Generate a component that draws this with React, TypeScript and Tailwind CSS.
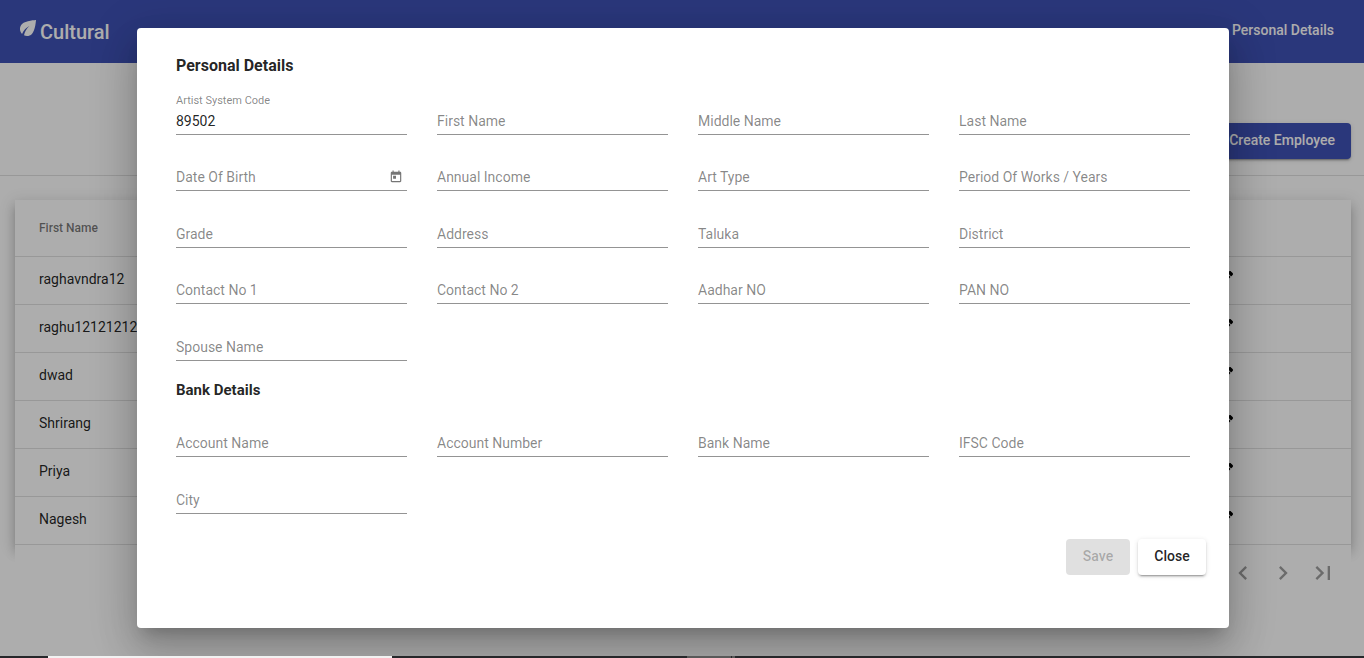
import { useId, useState } from "react";
import type { ReactNode } from "react";
import { FaPencilAlt } from "react-icons/fa";

const employees = ["raghavndra12", "raghu12121212", "dwad", "Shrirang", "Priya", "Nagesh"];

function Icon({ path, className }: { path: string; className: string }) {
  return (
    <svg viewBox="0 0 24 24" fill="currentColor" aria-hidden="true" className={className}>
      <path d={path} />
    </svg>
  );
}

const icons = {
  leaf: "M6.05 8.05c-2.73 2.73-2.73 7.15-.02 9.88 1.47-3.4 4.09-6.24 7.36-7.93-2.77 2.34-4.71 5.61-5.39 9.32 2.6 1.23 5.8.78 7.95-1.37C19.43 14.47 20 4 20 4S9.53 4.57 6.05 8.05z",
  today:
    "M19 3h-1V1h-2v2H8V1H6v2H5c-1.11 0-1.99.9-1.99 2L3 19c0 1.1.89 2 2 2h14c1.1 0 2-.9 2-2V5c0-1.1-.9-2-2-2zm0 16H5V8h14v11zM7 10h5v5H7z",
  previous: "M15.41 7.41L14 6l-6 6 6 6 1.41-1.41L10.83 12z",
  next: "M10 6L8.59 7.41 13.17 12l-4.58 4.59L10 18l6-6z",
  last: "M5.59 7.41L10.18 12l-4.59 4.59L7 18l6-6-6-6zM16 6h2v12h-2z",
};

function Field({ label, initial = "", children }: { label: string; initial?: string; children?: ReactNode }) {
  const id = useId();
  const [value, setValue] = useState(initial);
  return (
    <div className="flex flex-col justify-end">
      <div className="relative flex items-center border-b border-[#949494] pb-[3px]">
        <input
          id={id}
          value={value}
          placeholder=" "
          onChange={(event) => setValue(event.target.value)}
          className="peer h-5 w-full min-w-0 bg-transparent text-sm text-black/87 outline-none"
        />
        <label
          htmlFor={id}
          className="pointer-events-none absolute left-0 -top-[18px] text-[11px] leading-4 text-black/48 peer-placeholder-shown:top-0 peer-placeholder-shown:text-sm peer-placeholder-shown:leading-5"
        >
          {label}
        </label>
        {children}
      </div>
    </div>
  );
}

function Dialog() {
  return (
    <div className="absolute inset-0 flex items-center justify-center bg-black/32 pl-0.5">
      <form
        role="dialog"
        aria-label="Personal Details"
        onSubmit={(event) => event.preventDefault()}
        className="min-h-[600px] w-full max-w-[1092px] rounded bg-white pt-7 shadow-[0_11px_15px_-7px_rgba(0,0,0,0.2),0_24px_38px_3px_rgba(0,0,0,0.14),0_9px_46px_8px_rgba(0,0,0,0.12)]"
      >
        <div className="px-[39px]">
          <h2 className="mb-0.5 text-base leading-5 font-bold text-black/87">Personal Details</h2>
          <div className="grid min-h-[283px] auto-rows-fr grid-cols-4 gap-x-[30px]">
            <Field label="Artist System Code" initial="89502" />
            <Field label="First Name" />
            <Field label="Middle Name" />
            <Field label="Last Name" />
            <Field label="Date Of Birth">
              <button type="button" aria-label="Open calendar" className="mr-1 text-black/54">
                <Icon path={icons.today} className="size-3.5" />
              </button>
            </Field>
            <Field label="Annual Income" />
            <Field label="Art Type" />
            <Field label="Period Of Works / Years" />
            <Field label="Grade" />
            <Field label="Address" />
            <Field label="Taluka" />
            <Field label="District" />
            <Field label="Contact No 1" />
            <Field label="Contact No 2" />
            <Field label="Aadhar NO" />
            <Field label="PAN NO" />
            <Field label="Spouse Name" />
          </div>
          <h2 className="mt-[19px] text-[15px] leading-5 font-bold text-black/87">Bank Details</h2>
          <div className="grid min-h-[114px] auto-rows-fr grid-cols-4 gap-x-[30px]">
            <Field label="Account Name" />
            <Field label="Account Number" />
            <Field label="Bank Name" />
            <Field label="IFSC Code" />
            <Field label="City" />
          </div>
        </div>
        <div className="mt-[25px] flex justify-end gap-2 px-[23px]">
          <button
            type="submit"
            disabled
            className="h-9 min-w-16 rounded bg-black/12 px-4 pb-0.5 text-sm font-medium text-black/26"
          >
            Save
          </button>
          <button
            type="button"
            className="h-9 min-w-[68px] rounded bg-white px-4 pb-0.5 text-sm font-medium text-black/87 shadow-[0_3px_1px_-2px_rgba(0,0,0,0.2),0_2px_2px_0_rgba(0,0,0,0.14),0_1px_5px_0_rgba(0,0,0,0.12)]"
          >
            Close
          </button>
        </div>
      </form>
    </div>
  );
}

export default function App() {
  return (
    <div className="flex min-h-screen flex-col bg-white font-[Roboto,sans-serif] text-black/87">
      <div className="relative flex-1 overflow-hidden">
        <header className="flex h-[63px] items-center justify-between bg-[#3f51b5] pr-[30px] pl-4 text-white">
          <a href="#home" className="flex items-center text-xl font-medium">
            <Icon path={icons.leaf} className="mb-2 size-6" />
            Cultural
          </a>
          <a href="#personal-details" className="mb-1 text-sm font-medium">
            Personal Details
          </a>
        </header>
        <main>
          <div className="flex justify-end border-b border-black/12 px-[13px] pt-[60px] pb-4">
            <button
              type="button"
              className="h-9 rounded bg-[#3f51b5] px-4 pb-0.5 text-sm font-medium text-white shadow-[0_3px_1px_-2px_rgba(0,0,0,0.2),0_2px_2px_0_rgba(0,0,0,0.14),0_1px_5px_0_rgba(0,0,0,0.12)]"
            >
              Create Employee
            </button>
          </div>
          <div className="pt-6 pr-[13px] pl-[15px]">
            <div className="shadow-[0_5px_5px_-3px_rgba(0,0,0,0.2),0_8px_10px_1px_rgba(0,0,0,0.14),0_3px_14px_2px_rgba(0,0,0,0.12)]">
              <table className="w-full table-fixed bg-white text-left text-sm">
                <thead>
                  <tr className="h-14 border-b border-black/12">
                    <th className="pl-6 text-xs font-medium text-black/54">First Name</th>
                    <td className="w-[132px]" />
                  </tr>
                </thead>
                <tbody>
                  {employees.map((name) => (
                    <tr key={name} className="h-12 border-b border-black/12">
                      <td className="pb-0.5 pl-6">{name}</td>
                      <td className="pb-1">
                        <button type="button" aria-label={"Edit " + name} className="block text-black">
                          <FaPencilAlt className="size-3.5" />
                        </button>
                      </td>
                    </tr>
                  ))}
                </tbody>
              </table>
            </div>
            <div className="relative flex h-14 items-center justify-end bg-white pr-2 text-black/38">
              <button type="button" aria-label="Previous page" className="flex size-10 items-center justify-center">
                <Icon path={icons.previous} className="size-7" />
              </button>
              <button type="button" aria-label="Next page" className="flex size-10 items-center justify-center">
                <Icon path={icons.next} className="size-7" />
              </button>
              <button type="button" aria-label="Last page" className="flex size-10 items-center justify-center">
                <Icon path={icons.last} className="size-7" />
              </button>
            </div>
          </div>
        </main>
        <Dialog />
      </div>
      <div className="flex h-0.5 bg-[#26272a]">
        <div className="ml-12 w-[344px] bg-[#f2f2f2]" />
        <div className="ml-[295px] w-11 bg-[#595959]" />
        <div className="ml-px w-[3px] bg-[#595959]" />
      </div>
    </div>
  );
}
